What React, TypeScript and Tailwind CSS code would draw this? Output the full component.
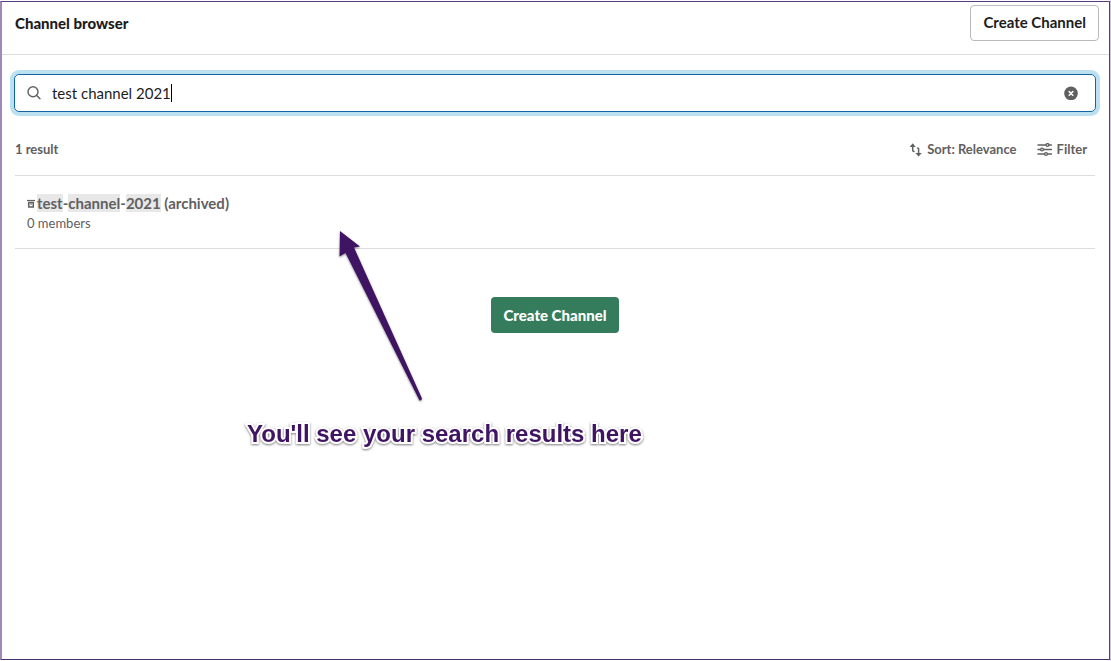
import { useState } from "react"

interface Channel {
  name: string[]
  archived: boolean
  members: number
}

const channels: Channel[] = [
  { name: ["test", "channel", "2021"], archived: true, members: 0 },
]

function SearchIcon() {
  return (
    <svg className="size-4 shrink-0" viewBox="0 0 16 16" fill="none" stroke="#616061" strokeWidth="1.4" strokeLinecap="round" aria-hidden="true">
      <circle cx="7" cy="6.8" r="5" />
      <path d="M10.7 10.5 14 13.8" />
    </svg>
  )
}

function ClearIcon() {
  return (
    <svg className="size-3.5" viewBox="0 0 14 14" aria-hidden="true">
      <circle cx="7" cy="7.4" r="6.8" fill="#616061" />
      <path d="M5.2 5.6 8.8 9.2M8.8 5.6 5.2 9.2" stroke="#fff" strokeWidth="1.5" strokeLinecap="round" />
    </svg>
  )
}

function SortIcon() {
  return (
    <svg className="h-3.5 w-3.5" viewBox="0 0 14 14" fill="none" stroke="#616061" strokeWidth="1.5" strokeLinecap="round" aria-hidden="true">
      <path d="M3.7 2V7.2Q3.7 8.4 5 8.4" />
      <path d="M9.6 11.5V5.8Q9.6 5 8.6 5" />
      <path d="M3.7.3 6.7 3.9H.7ZM9.6 13.5 6.4 9.9H12.8Z" fill="#616061" stroke="none" />
    </svg>
  )
}

function FilterIcon() {
  return (
    <svg className="h-3.5 w-4" viewBox="0 0 16 14" fill="none" stroke="#616061" strokeWidth="1.4" strokeLinecap="round" aria-hidden="true">
      <path d="M1 2H8.6M12.4 2H14.4M1 6.5H3.1M6.9 6.5H14.4M1 11H7.1M10.9 11H14.4" />
      <circle cx="10.5" cy="2" r="1.4" />
      <circle cx="5" cy="6.5" r="1.4" />
      <circle cx="9" cy="11" r="1.4" />
    </svg>
  )
}

function ArchiveIcon() {
  return (
    <svg className="h-2.5 w-2" viewBox="0 0 8 10" fill="none" stroke="#616061" aria-hidden="true">
      <path d="M0 2.5H8" strokeWidth="1.2" />
      <path d="M1.7 4.5H6.3V8.9H1.7Z" strokeWidth="1.5" />
      <path d="M2.8 6H5.2" strokeWidth="1" />
    </svg>
  )
}

function ChannelRow({ channel }: { channel: Channel }) {
  return (
    <li className="border-b border-[#dddddd] px-3 pt-4 pb-4">
      <div className="flex items-center text-[15px] leading-[22px] font-bold">
        <ArchiveIcon />
        <a href="#channel" className="ml-0.5">
          {channel.name.map((part, idx) => (
            <span key={part}>
              {idx > 0 && "-"}
              <mark className="bg-[#e8e8e8] text-inherit">{part}</mark>
            </span>
          ))}
          {channel.archived && " (archived)"}
        </a>
      </div>
      <p className="text-[13px] leading-[18px]">{channel.members} members</p>
    </li>
  )
}

function Annotation() {
  return (
    <>
      <svg className="pointer-events-none absolute top-[222px] left-[328px] h-[184px] w-[100px]" viewBox="330 224 100 184" aria-hidden="true">
        <path
          className="drop-shadow-[0_1px_1px_rgba(0,0,0,0.45)]"
          d="M340 231 360 246.5 354 247.5 422 398.5Q421.5 401 419.5 400.5L345.5 253 339.5 256.5Z"
          fill="#3f1463"
        />
      </svg>
      <p className="pointer-events-none absolute top-[416px] left-[245px] font-['Liberation_Sans',Arial,sans-serif] text-2xl font-bold whitespace-nowrap text-[#3f1463] [paint-order:stroke_fill] [-webkit-text-stroke:4px_white] drop-shadow-[0_1px_1px_rgba(0,0,0,0.5)]">
        You'll see your search results here
      </p>
    </>
  )
}

export default function App() {
  const [query, setQuery] = useState("test channel 2021")

  return (
    <div className="min-h-screen border-r border-[#cfc4dc] bg-white pt-px pb-px font-[Lato,sans-serif] text-[#616061]">
      <div className="relative min-h-[calc(100vh-2px)] border-t border-r border-b border-l-2 border-t-[#5b3a7e] border-r-[#5b3a7e] border-b-[#49306f] border-l-[#a088b8]">
        <header className="flex items-start justify-between border-b border-[#dddddd] pt-[3px] pr-2.5 pb-[13px] pl-[13px]">
          <h1 className="mt-[7px] text-[15px] leading-[22px] font-black text-[#1d1c1d]">Channel browser</h1>
          <button type="button" className="h-9 rounded border border-[#bbbabb] px-3 pb-0.5 text-[15px] font-bold text-[#1d1c1d]">
            Create Channel
          </button>
        </header>

        <main className="pt-[19px] pr-[13px] pl-3">
          <label className="flex h-[38px] items-center rounded-[5px] border border-[#1264a3] pr-[17px] pl-[11px] shadow-[0_0_0_4px_#bbe0ef]">
            <SearchIcon />
            <input
              type="text"
              aria-label="Search channels"
              value={query}
              onChange={(e) => setQuery(e.target.value)}
              className="ml-2.5 [field-sizing:content] text-[15px] text-[#1d1c1d] caret-transparent outline-none"
            />
            <span className="h-[18px] w-px bg-black" />
            <button type="button" aria-label="Clear search" onClick={() => setQuery("")} className="ml-auto">
              <ClearIcon />
            </button>
          </label>

          <div className="mx-px">
            <div className="flex h-16 items-center justify-between border-b border-[#dddddd] pt-3 text-[13px] font-bold">
              <p>1 result</p>
              <div className="flex items-center gap-5 pr-2">
                <button type="button" className="flex items-center gap-1">
                  <SortIcon />
                  Sort: Relevance
                </button>
                <button type="button" className="flex items-center gap-1">
                  <FilterIcon />
                  Filter
                </button>
              </div>
            </div>

            <ul>
              {channels.map((channel) => (
                <ChannelRow key={channel.name.join("-")} channel={channel} />
              ))}
            </ul>
          </div>

          <div className="mt-12 flex justify-center">
            <button type="button" className="h-9 rounded bg-[#347c5b] px-3 text-[15px] font-black text-white">
              Create Channel
            </button>
          </div>
        </main>

        <Annotation />
      </div>
    </div>
  )
}
